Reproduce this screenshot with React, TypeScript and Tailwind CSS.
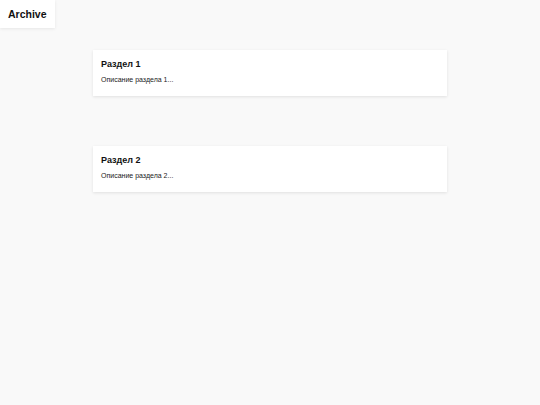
export default function App() {
  return (
    <div className="min-h-[405px] w-full bg-[#f9f9f9]" style={{ fontFamily: '"Liberation Sans", Arial, sans-serif' }}>
      <div className="inline-flex h-[28px] items-center bg-white px-[8px] pt-[1px] shadow-[0_1px_3px_rgba(0,0,0,0.08)]">
        <span className="text-[10.5px] font-bold text-[#111]">Archive</span>
      </div>
      <div className="mx-auto mt-[22px] flex w-[354px] flex-col gap-[50px]">
        {[1, 2].map((n) => (
          <div key={n} className="h-[46px] bg-white px-[8px] pt-[9px] shadow-[0_1px_3px_rgba(0,0,0,0.1)]">
            <div className="text-[9px] font-bold leading-[11px] text-[#111]">Раздел {n}</div>
            <div className="mt-[5px] text-[7px] leading-[9px] text-[#222]">Описание раздела {n}...</div>
          </div>
        ))}
      </div>
    </div>
  );
}
